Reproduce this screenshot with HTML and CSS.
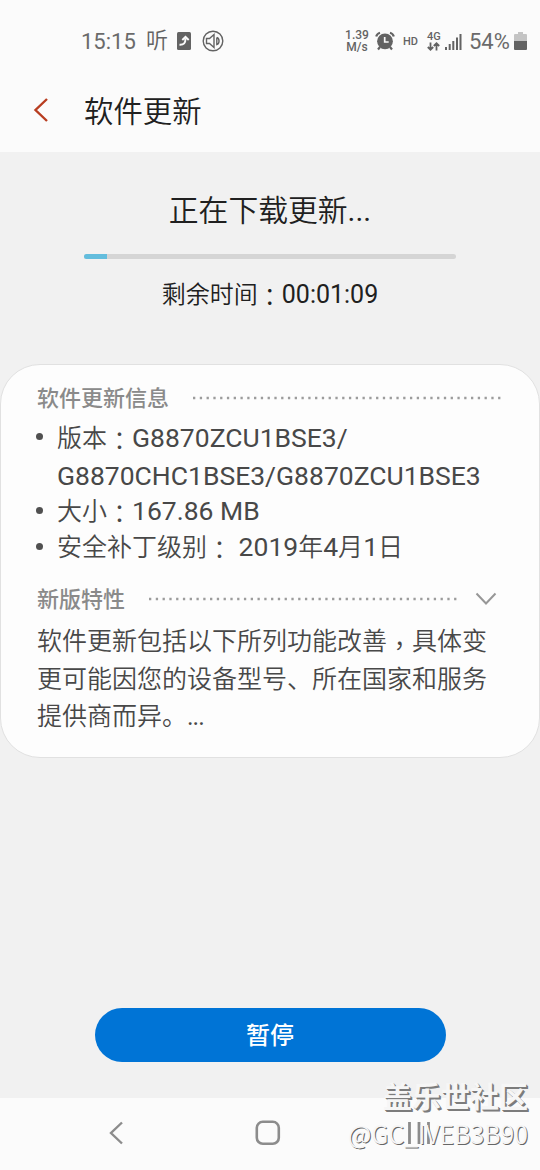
FILE: index.html
```html
<!DOCTYPE html>
<html lang="zh-CN">
<head>
<meta charset="utf-8">
<title>软件更新</title>
<link rel="stylesheet" href="styles.css">
</head>
<body>
<div class="screen">
  <div class="status">
    <span class="clock">15:15</span>
    <span class="listen">听</span>
    <svg class="ic-call" width="14" height="18" viewBox="0 0 14 18"><rect width="14" height="18" rx="1.5" fill="#636363"/><path d="M2.500 12.800C7 13 8.500 11 8.500 6.500M5.300 8L8.500 4.800l3.200 3.200" fill="none" stroke="#fafafa" stroke-width="1.900"/></svg>
    <svg class="ic-sound" width="22" height="22" viewBox="0 0 22 22" fill="none" stroke="#636363" stroke-width="1.400"><circle cx="11" cy="11" r="9.800"/><path d="M4.500 8.500h3l4.500-4v13l-4.500-4h-3zM14.800 7.500v7c3-.8 3-6.200 0-7"/></svg>
    <span class="speed"><span>1.39</span><span>M/s</span></span>
    <svg class="ic-alarm" width="20" height="20" viewBox="0 0 20 20"><circle cx="10" cy="10.300" r="7.900" fill="#636363"/><path d="M1.200 5.500Q2 2.500 5 1.700M18.800 5.500Q18 2.500 15 1.700M5 16l-2 2.500M15 16l2 2.500" fill="none" stroke="#636363" stroke-width="2.200"/><path d="M9.700 6v5h4" fill="none" stroke="#fafafa" stroke-width="1.700"/></svg>
    <span class="hd">HD</span>
    <span class="net"><span>4G</span>
      <svg width="13" height="9" viewBox="0 0 13 9" fill="none" stroke="#636363" stroke-width="1.800"><path d="M3.500.5v7M.8 5l2.700 2.700L6.200 5M9.500 8.500v-7M6.800 4l2.700-2.700L12.200 4"/></svg></span>
    <svg class="ic-signal" width="17" height="16" viewBox="0 0 17 16" fill="#636363"><path d="M0 13h2v3H0zM3.700 10h2v6h-2zM7.300 7h2v9h-2zM11 3.500h2V16h-2zM14.500 0h2v16h-2z"/></svg>
    <span class="pct">54%</span>
    <svg class="ic-batt" width="13" height="18" viewBox="0 0 13 18"><path d="M4 0h5v2h3q1 0 1 1v6H0V3q0-1 1-1h3z" fill="#c4c4c4"/><path d="M0 9h13v8q0 1-1 1H1q-1 0-1-1z" fill="#636363"/></svg>
  </div>
  <header class="header">
    <svg class="back" width="16" height="26" viewBox="0 0 16 26"><path d="M15 2L3.500 13 15 24" fill="none" stroke="#b83d20" stroke-width="2.400"/></svg>
    <h1 class="title">软件更新</h1>
  </header>
  <main class="main">
    <h2 class="state">正在下载更新<span class="dots">...</span></h2>
    <div class="track"><div class="fill"></div></div>
    <p class="remain">剩余时间<span class="mid" lang="zh-TW">：</span><span class="num">00:01:09</span></p>
    <section class="card">
      <div class="sec"><h3>软件更新信息</h3><svg class="dotline" width="308" height="4"><path d="M0 2h308" stroke="#9c9c9c" stroke-width="2.400" stroke-dasharray="2.300 4.480"/></svg></div>
      <ul class="list">
        <li>版本<span class="mid" lang="zh-TW">：</span><span class="lat">G8870ZCU1BSE3/<br>G8870CHC1BSE3/G8870ZCU1BSE3</span></li>
        <li>大小<span class="mid" lang="zh-TW">：</span><span class="lat">167.86 MB</span></li>
        <li>安全补丁级别<span class="mid" lang="zh-TW">：</span><span class="lat"> 2019</span>年<span class="lat">4</span>月<span class="lat">1</span>日</li>
      </ul>
      <div class="sec sec-new"><h3>新版特性</h3><svg class="dotline" width="308" height="4"><path d="M0 2h308" stroke="#9c9c9c" stroke-width="2.400" stroke-dasharray="2.300 4.480"/></svg><svg class="chev" width="22" height="14" viewBox="0 0 22 14"><path d="M1.500 1.500l9.500 10 9.500-10" fill="none" stroke="#979797" stroke-width="2"/></svg></div>
      <p class="desc">软件更新包括以下所列功能改善<span class="mid comma" lang="zh-TW">，</span>具体变<br>更可能因您的设备型号、所在国家和服务<br>提供商而异。<span class="ell">...</span></p>
    </section>
    <button class="pause">暂停</button>
  </main>
  <nav class="nav">
    <svg class="nav-back" width="16" height="24" viewBox="0 0 16 24"><path d="M14 1.500L3 12l11 10.500" fill="none" stroke="#8c8c8c" stroke-width="2.400"/></svg>
    <svg class="nav-home" width="26" height="26" viewBox="0 0 26 26"><rect x="1.800" y="1.800" width="22" height="22" rx="6" fill="none" stroke="#8c8c8c" stroke-width="2.600"/></svg>
    <svg class="nav-recent" width="22" height="22" viewBox="0 0 22 22"><path d="M1.500 0v22M11 0v22M20.500 0v22" stroke="#8c8c8c" stroke-width="2.800"/></svg>
  </nav>
  <div class="mark"><div class="mark-name">盖乐世社区</div><div class="mark-user">@GC_IVEB3B90</div></div>
</div>
</body>
</html>
```
FILE: styles.css
```css
* { box-sizing: border-box; }
body { margin: 0; font-family: Roboto, "Noto Sans CJK SC", sans-serif; }
h1, h2, h3, p, ul { margin: 0; padding: 0; font-weight: 400; }
svg { display: block; flex: none; }
.screen { position: relative; width: 540px; height: 1170px; background: #f1f1f1; overflow: hidden; display: flex; flex-direction: column; }
.status { height: 82px; flex: none; background: #fbfbfb; display: flex; align-items: center; padding-left: 81px; color: #636363; white-space: nowrap; }
.clock { width: 65px; margin-top: 2px; font-size: 22px; line-height: 28px; color: #6a6a6a; }
.listen { width: 31px; font-size: 22px; line-height: 28px; font-weight: 350; }
.ic-sound { margin-left: 11px; }
.speed { width: 26px; margin-left: 120px; display: flex; flex-direction: column; align-items: center; font-size: 12px; line-height: 12px; font-weight: 500; }
.ic-alarm { margin-left: 5px; }
.hd { width: 24px; margin-left: 8px; font-size: 11px; font-weight: 500; }
.net { width: 18px; display: flex; flex-direction: column; font-size: 11px; line-height: 10px; font-weight: 500; }
.ic-signal { margin: 2px 0 0 0; }
.pct { width: 45px; margin: 2px 0 0 7px; font-size: 22px; line-height: 28px; color: #6a6a6a; }
.header { height: 70px; flex: none; background: #fbfbfb; display: flex; align-items: center; padding: 0 0 14px 32px; }
.title { margin: 4px 0 0 36px; font-size: 29.4px; line-height: 40px; font-weight: 350; color: #202020; }
.main { height: 946px; flex: none; display: flex; flex-direction: column; align-items: center; }
.state { margin-top: 38px; font-size: 29.8px; line-height: 42px; font-weight: 350; color: #202020; }
.dots { font-weight: 400; }
.track { width: 372px; height: 5px; flex: none; margin-top: 22px; border-radius: 3px; background: #d5d5d5; }
.fill { width: 23px; height: 5px; border-radius: 3px 0 0 3px; background: #63bddd; }
.remain { height: 36px; margin-top: 18px; font-size: 24px; line-height: 36px; font-weight: 350; color: #202020; }
.mid { font-family: "Noto Sans CJK TC", sans-serif; line-height: 1px; vertical-align: -3px; }
.comma { vertical-align: -5px; }
.num { font-size: 25px; font-weight: 400; line-height: 1px; }
.card { width: 540px; height: 394px; flex: none; margin-top: 51px; padding: 13px 35px 0 36px; border: 1px solid #e1e1e1; border-radius: 40px; background: #fdfdfd; color: #484848; }
.sec { height: 40px; display: flex; align-items: center; }
.sec h3 { margin-top: 2px; font-size: 22px; line-height: 32px; font-weight: 500; color: #8a8a8a; }
.dotline { margin-left: 24px; }
.list { margin-top: 2px; list-style: none; font-size: 25px; font-weight: 350; }
.list li { position: relative; height: 36px; padding-left: 20px; line-height: 36px; }
.list li:first-child { height: 74px; line-height: 37.500px; }
.list li::before { content: ""; position: absolute; left: -1px; top: 13px; width: 7px; height: 7px; border-radius: 50%; background: #505050; }
.lat { font-size: 26.500px; font-weight: 400; line-height: 1px; }
.ell { line-height: 1px; font-weight: 400; letter-spacing: -1px; }
.sec-new { margin-top: 13px; }
.chev { margin-left: 18px; }
.desc { margin-top: 4px; font-size: 25px; line-height: 37.500px; font-weight: 350; white-space: nowrap; }
.pause { width: 351px; height: 54px; flex: none; margin-top: 250px; border: 0; border-radius: 27px; background: #0074d6; color: #fff; font: 500 24px/36px "Noto Sans CJK SC", sans-serif; padding: 0 0 2px; }
.nav { height: 72px; flex: none; background: #fbfbfb; display: flex; align-items: center; padding: 0 0 2px 108px; }
.nav-home { margin-left: 131px; }
.nav-recent { margin-left: 127px; }
.mark { position: absolute; right: 12px; bottom: 18px; text-align: right; color: #f6f6f6; white-space: nowrap; }
.mark-name { font: 700 29px/38px "Noto Sans CJK SC", sans-serif; text-shadow: 1px 1px 0 #7c7c7c, 2px 2px 0 #7c7c7c; }
.mark-user { font: 350 25px/38px "Noto Sans CJK SC", sans-serif; text-shadow: 1px 1px 0 #666; }
```
